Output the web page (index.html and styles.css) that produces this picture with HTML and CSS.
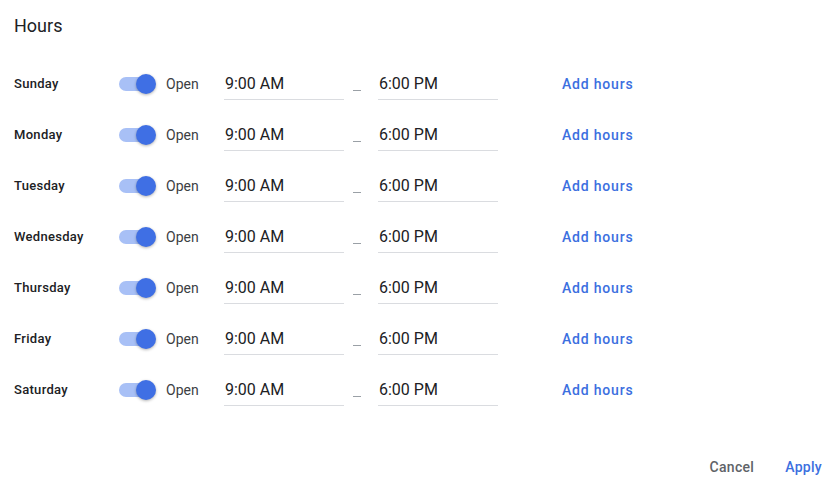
FILE: index.html
```html
<!DOCTYPE html>
<html>
<head>
<meta charset="utf-8">
<link rel="stylesheet" href="styles.css">
</head>
<body>
<div class="dialog">
  <div class="title">Hours</div>
  <div class="rows">
    <div class="row"><div class="day">Sunday</div><div class="toggle"><span class="track"></span><span class="thumb"></span></div><div class="open">Open</div><div class="input">9:00 AM</div><div class="sep"><span></span></div><div class="input">6:00 PM</div><a class="add">Add hours</a></div>
    <div class="row"><div class="day">Monday</div><div class="toggle"><span class="track"></span><span class="thumb"></span></div><div class="open">Open</div><div class="input">9:00 AM</div><div class="sep"><span></span></div><div class="input">6:00 PM</div><a class="add">Add hours</a></div>
    <div class="row"><div class="day">Tuesday</div><div class="toggle"><span class="track"></span><span class="thumb"></span></div><div class="open">Open</div><div class="input">9:00 AM</div><div class="sep"><span></span></div><div class="input">6:00 PM</div><a class="add">Add hours</a></div>
    <div class="row"><div class="day">Wednesday</div><div class="toggle"><span class="track"></span><span class="thumb"></span></div><div class="open">Open</div><div class="input">9:00 AM</div><div class="sep"><span></span></div><div class="input">6:00 PM</div><a class="add">Add hours</a></div>
    <div class="row"><div class="day">Thursday</div><div class="toggle"><span class="track"></span><span class="thumb"></span></div><div class="open">Open</div><div class="input">9:00 AM</div><div class="sep"><span></span></div><div class="input">6:00 PM</div><a class="add">Add hours</a></div>
    <div class="row"><div class="day">Friday</div><div class="toggle"><span class="track"></span><span class="thumb"></span></div><div class="open">Open</div><div class="input">9:00 AM</div><div class="sep"><span></span></div><div class="input">6:00 PM</div><a class="add">Add hours</a></div>
    <div class="row"><div class="day">Saturday</div><div class="toggle"><span class="track"></span><span class="thumb"></span></div><div class="open">Open</div><div class="input">9:00 AM</div><div class="sep"><span></span></div><div class="input">6:00 PM</div><a class="add">Add hours</a></div>
  </div>
  <div class="footer">
    <a class="btn cancel">Cancel</a>
    <a class="btn apply">Apply</a>
  </div>
</div>
</body>
</html>
```

FILE: styles.css
```css
html, body {
  margin: 0;
  padding: 0;
  background: #ffffff;
}
body {
  font-family: Roboto, "Liberation Sans", sans-serif;
  color: #202124;
}
.dialog {
  width: 834px;
  height: 492px;
  box-sizing: border-box;
  padding: 14px 12px 0 14px;
}
.title {
  font-size: 18px;
  line-height: 24px;
  font-weight: 400;
  color: #202124;
  margin-bottom: 20px;
}
.rows {
  display: flex;
  flex-direction: column;
}
.row {
  height: 51px;
  display: flex;
  align-items: center;
}
.day {
  width: 105px;
  font-size: 13px;
  font-weight: 500;
  letter-spacing: 0.3px;
  color: #202124;
}
.toggle {
  position: relative;
  width: 37px;
  height: 22px;
  display: flex;
  align-items: center;
}
.track {
  display: block;
  width: 34px;
  height: 14px;
  border-radius: 7px;
  background: #a8c0f6;
}
.thumb {
  position: absolute;
  right: 0;
  top: 1px;
  width: 20px;
  height: 20px;
  border-radius: 50%;
  background: #3f6fe4;
  box-shadow: 0 1px 3px rgba(0, 0, 0, 0.3);
}
.open {
  margin-left: 10px;
  width: 58px;
  font-size: 14px;
  color: #3c4043;
}
.input {
  width: 119px;
  height: 31px;
  border-bottom: 1px solid #dadce0;
  display: flex;
  align-items: center;
  padding-left: 1px;
  font-size: 16px;
  color: #202124;
}
.sep {
  width: 34px;
  height: 32px;
  display: flex;
  align-items: center;
}
.sep span {
  display: block;
  width: 8px;
  height: 1px;
  margin: 14px 0 0 9px;
  background: #9aa0a6;
}
.add {
  margin-left: 64px;
  font-size: 14px;
  font-weight: 500;
  letter-spacing: 0.8px;
  color: #3c6fe0;
}
.footer {
  display: flex;
  justify-content: flex-end;
  gap: 31px;
  margin-top: 42px;
  line-height: 20px;
}
.btn {
  font-size: 14px;
  font-weight: 500;
  letter-spacing: 0.3px;
}
.cancel {
  color: #5f6368;
}
.apply {
  color: #3c6fe0;
}
```
